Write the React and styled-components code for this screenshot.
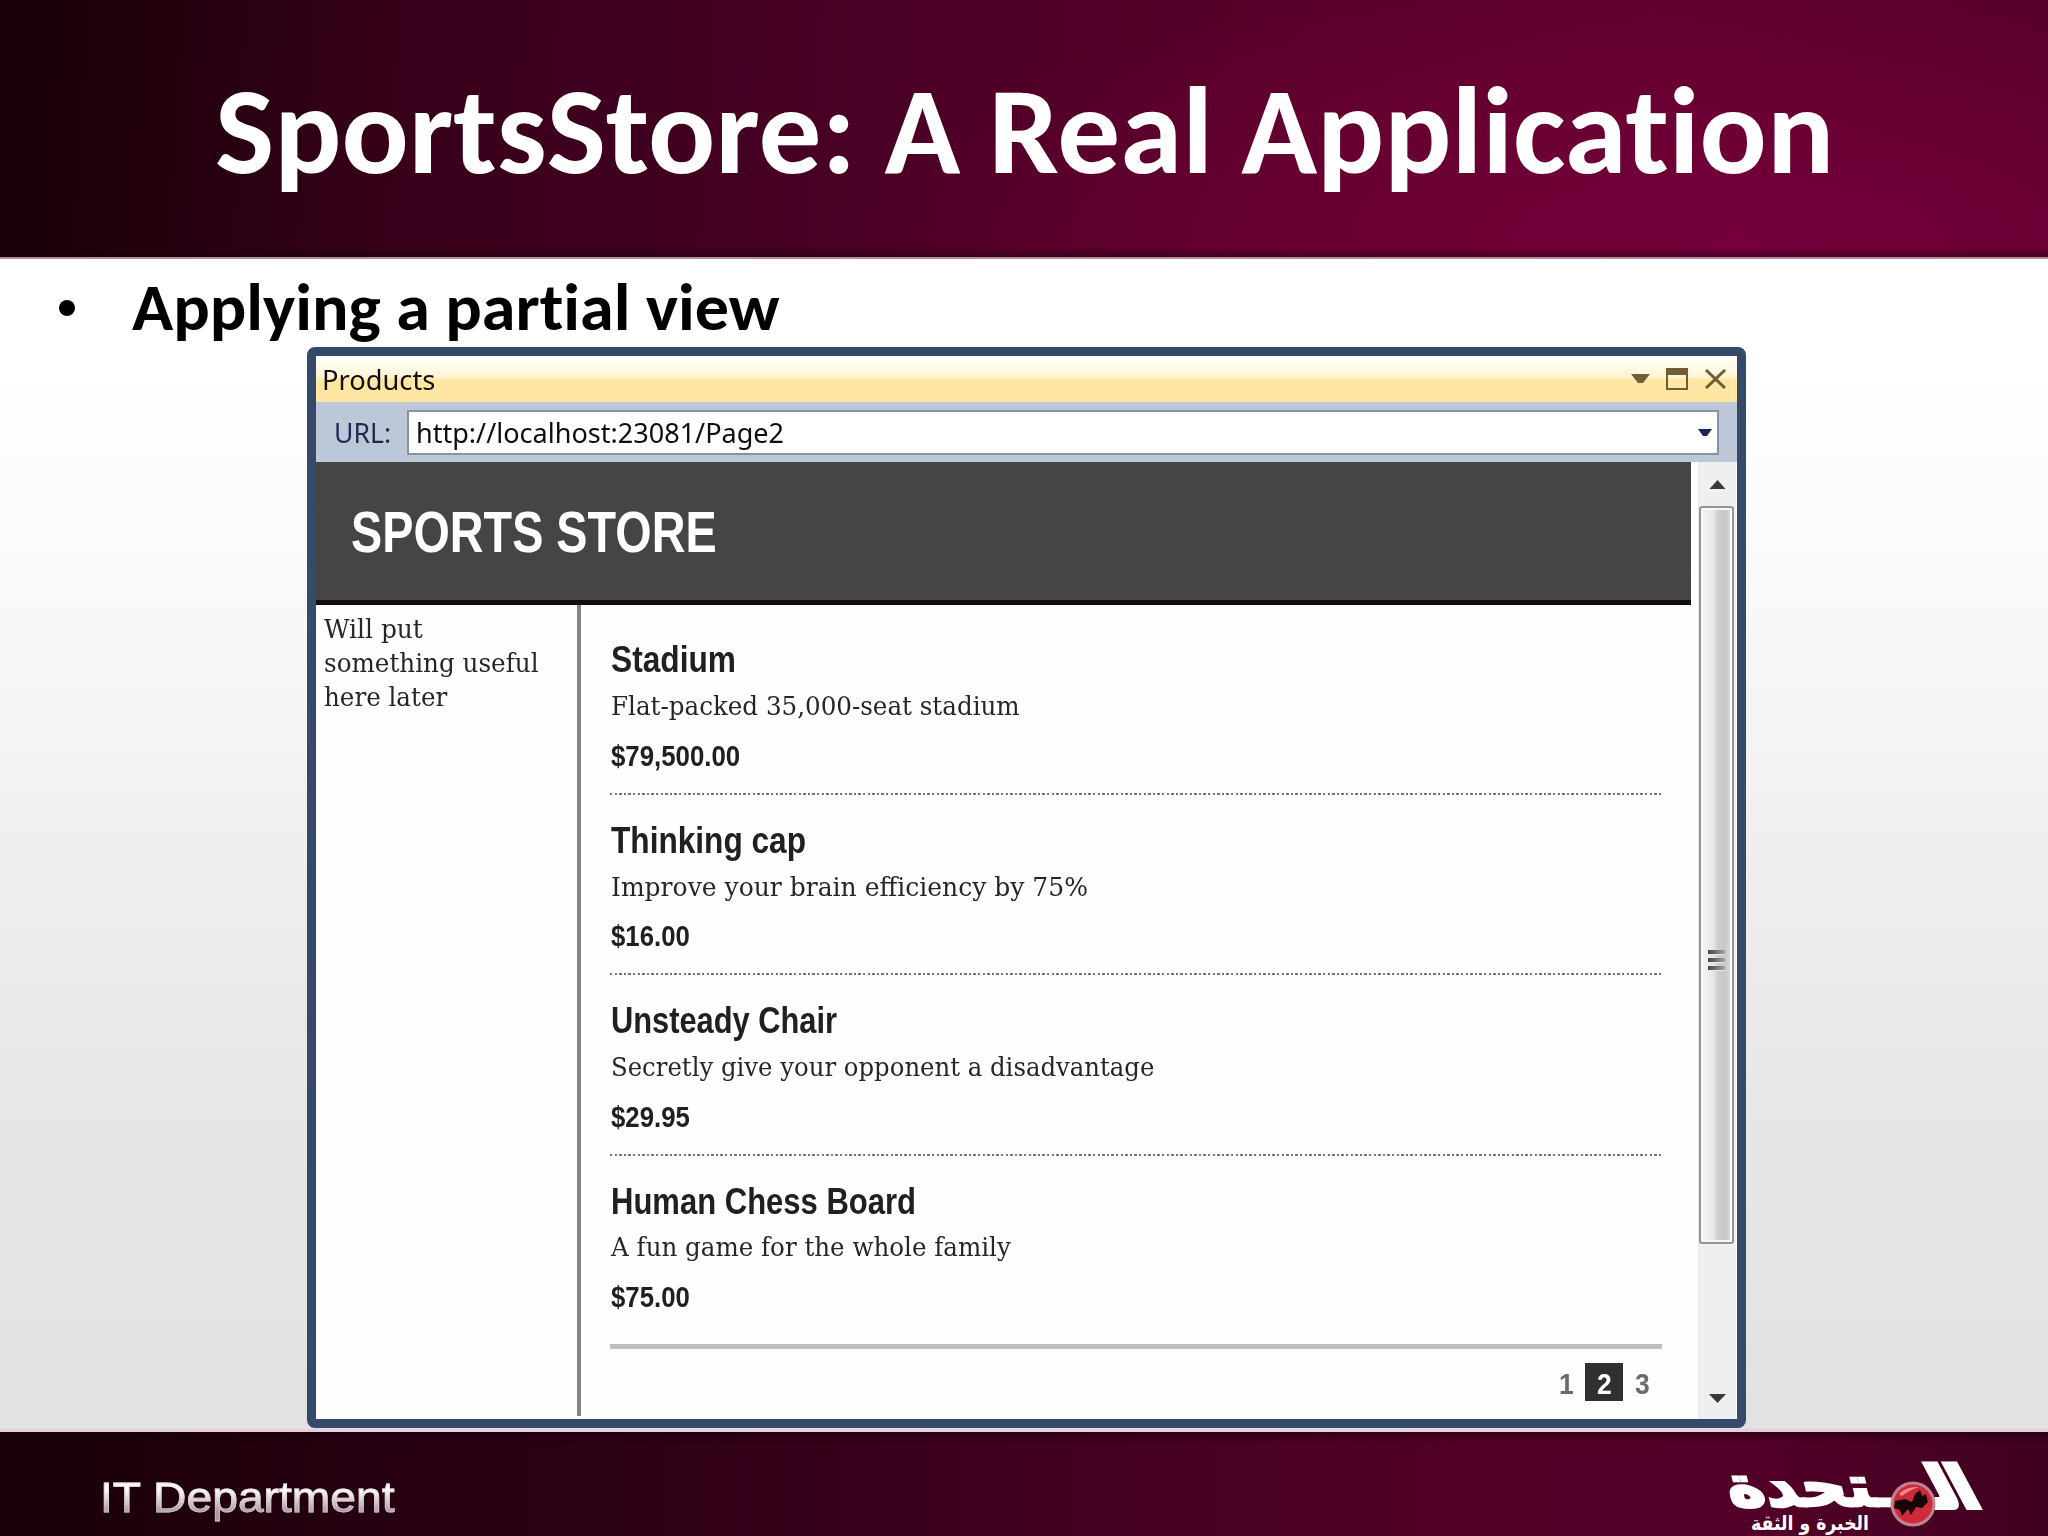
import React, { useLayoutEffect, useRef, useState } from "react";
import styled, { createGlobalStyle } from "styled-components";

const GlobalStyle = createGlobalStyle`
  * {
    box-sizing: border-box;
  }
  body {
    margin: 0;
    background: #fff;
  }
`;

const sans = `"Liberation Sans", Arial, sans-serif`;
const serif = `"DejaVu Serif Condensed", "DejaVu Serif", serif`;
const ui = `"Noto Sans", "Open Sans", sans-serif`;
const slideFont = `Carlito, Lato, sans-serif`;

const Slide = styled.div`
  width: 2048px;
  height: 1536px;
  display: flex;
  flex-direction: column;
  overflow: hidden;
  background: linear-gradient(180deg, #ffffff 24%, #fbfafd 34%, #f5f4f7 46%, #eeecef 58%, #e7e6e8 72%, #e2e1e4 91%);
`;

const Header = styled.header`
  height: 259px;
  flex: none;
  padding: 61px 0 0 215px;
  border-bottom: 2px solid #b58ba0;
  background:
    linear-gradient(180deg, rgba(20, 0, 8, 0) 96%, rgba(20, 0, 8, 0.4) 100%),
    radial-gradient(ellipse 900px 280px at 1740px 245px, rgba(122, 0, 62, 0.85) 0%, rgba(118, 0, 58, 0.5) 50%, rgba(110, 0, 52, 0) 100%),
    linear-gradient(94deg, #190007 0%, #24000f 9%, #38001a 20%, #400020 32%, #4c0025 45%, #580029 62%, #5e002c 80%, #55002a 100%);
`;

const Title = styled.h1`
  margin: 0;
  font: 700 ${(props) => props.$size}px / 140px ${slideFont};
  font-variant-ligatures: none;
  color: #fff;
`;

const Content = styled.main`
  flex: none;
  height: 1170px;
  display: flex;
  flex-direction: column;
`;

const BulletRow = styled.div`
  display: flex;
  align-items: center;
  height: 88px;
  flex: none;
  padding: 9px 0 0 59px;
  gap: 57px;
  font: 700 66px / 78px ${slideFont};
  font-variant-ligatures: none;
  color: #000;
`;

const Dot = styled.span`
  width: 16px;
  height: 16px;
  border-radius: 50%;
  background: #000;
`;

const Window = styled.section`
  width: 1439px;
  height: 1081px;
  flex: none;
  margin-left: 307px;
  border: 9px solid #354a6a;
  border-radius: 8px;
  background: #fefefe;
  display: flex;
  flex-direction: column;
`;

const TitleBar = styled.div`
  height: 46px;
  flex: none;
  display: flex;
  align-items: center;
  justify-content: space-between;
  padding: 0 10px 0 6px;
  background: linear-gradient(180deg, #fffefa 0%, #fff6d8 44%, #ffe6a2 52%, #ffe6a2 100%);
  font: 28px / 46px ${ui};
  color: #150f14;
`;

const WindowButtons = styled.div`
  display: flex;
  align-items: center;
  gap: 16px;
  padding-bottom: 1px;
`;

const UrlBar = styled.div`
  height: 60px;
  flex: none;
  display: flex;
  align-items: center;
  padding: 0 18px 0 18px;
  gap: 16px;
  background: #bcc7d8;
  font: 28px / 42px ${ui};
  color: #1d2a50;
`;

const UrlInput = styled.div`
  flex: 1;
  height: 45px;
  display: flex;
  align-items: center;
  justify-content: space-between;
  padding: 0 5px 0 7px;
  border: 2px solid #8593a5;
  background: #fff;
  color: #100c14;
`;

const Viewport = styled.div`
  flex: 1;
  display: flex;
  min-height: 0;
`;

const Page = styled.div`
  width: 1375px;
  display: flex;
  flex-direction: column;
`;

const Banner = styled.div`
  height: 143px;
  flex: none;
  padding: 38px 0 0 35px;
  border-bottom: 5px solid #130d12;
  background: linear-gradient(180deg, #444643, #464346);
  font: 700 57px / 64px ${sans};
  color: #fff;
`;

const Columns = styled.div`
  flex: 1;
  display: flex;
`;

const Sidebar = styled.aside`
  width: 265px;
  height: 811px;
  flex: none;
  padding: 7px 0 0 8px;
  border-right: 4px solid #858285;
  font: 26px / 34px ${serif};
  color: #28242c;
`;

const Products = styled.div`
  width: 1052px;
  margin: 9.6px 0 0 29px;
`;

const Item = styled.article`
  height: 180.4px;
  padding: 23.8px 0 0 1px;
  background: ${(props) =>
    props.$last
      ? "none"
      : "repeating-linear-gradient(90deg, #77747a 0 2.4px, transparent 2.4px 4.6px) left bottom / 100% 2px no-repeat"};
`;

const Name = styled.h3`
  margin: 0 0 1.8px;
  font: 700 36px / 44px ${sans};
  color: #202024;
`;

const Description = styled.div`
  margin-bottom: 5.7px;
  font: 26px / 44px ${serif};
  color: #28242c;
`;

const Price = styled.h4`
  margin: 0;
  font: 700 30px / 44px ${sans};
  color: #202024;
`;

const Pager = styled.nav`
  display: flex;
  justify-content: flex-end;
  margin-top: 7.500px;
  padding: 14px 1px 0 0;
  border-top: 5px solid #c0bec0;
`;

const PageLink = styled.span`
  width: 38px;
  height: 38px;
  display: flex;
  justify-content: center;
  font: 700 30px / 41px ${sans};
  color: ${(props) => (props.$current ? "#fff" : "#6c6a6c")};
  background: ${(props) => (props.$current ? "#303030" : "transparent")};
`;

const ScrollBar = styled.div`
  width: 38px;
  margin-left: 7px;
  display: flex;
  flex-direction: column;
  align-items: center;
  background: #f0eff0;
  border-left: 1px solid #e6e6e6;
`;

const Arrow = styled.svg`
  flex: none;
  display: block;
`;

const Thumb = styled.div`
  width: 35px;
  height: 738px;
  flex: none;
  margin: 17px 2px 150px 0;
  padding-top: 171px;
  display: flex;
  flex-direction: column;
  justify-content: center;
  align-items: center;
  gap: 3px;
  border: 2px solid #949494;
  border-radius: 3px;
  box-shadow: inset 0 0 0 2px #f8f8f8;
  background: linear-gradient(90deg, #f4f4f4 0%, #e6e6e6 42%, #cfcfcf 52%, #c8c8c8 78%, #dedede 100%);
`;

const GripLine = styled.span`
  width: 17px;
  height: 5px;
  background: linear-gradient(90deg, #464448, #a5a4a6);
  border-bottom: 1px solid #e8e8e8;
`;

const Footer = styled.footer`
  flex: 1;
  display: flex;
  justify-content: space-between;
  border-top: 3px solid #e3d0da;
  padding: 0 61px 0 100px;
  background:
    linear-gradient(180deg, rgba(20, 0, 8, 0.4) 0%, rgba(20, 0, 8, 0) 12%),
    linear-gradient(90deg, #190007 0%, #22000e 12%, #2c0015 30%, #42001f 52%, #530027 72%, #520027 86%, #400020 100%);
`;

const FitBox = styled.span`
  display: block;
  flex: none;
  white-space: nowrap;
  width: ${(props) => props.$width}px;
`;

const FitText = styled.span`
  display: inline-block;
  transform-origin: left center;
`;

const Department = styled.div`
  padding-top: 38px;
  font: 42px / 56px ${sans};
  filter: blur(0.7px);

  ${FitText} {
    color: transparent;
    -webkit-text-stroke: 0.8px rgba(225, 210, 218, 0.7);
    background: linear-gradient(180deg, #ffffff 35%, #a89aa2 75%);
    background-clip: text;
    -webkit-background-clip: text;
  }
`;

const LogoSvg = styled.svg`
  overflow: visible;
  flex: none;
`;

// squeezes or stretches a line of text to a fixed width
const Fit = ({ width, children }) => {
  const ref = useRef(null);
  const [scale, setScale] = useState(1);

  useLayoutEffect(() => {
    setScale(width / ref.current.offsetWidth);
  }, [width, children]);

  return (
    <FitBox $width={width}>
      <FitText ref={ref} style={{ transform: `scaleX(${scale})` }}>
        {children}
      </FitText>
    </FitBox>
  );
};

const products = [
  { name: "Stadium", nameWidth: 125, text: "Flat-packed 35,000-seat stadium", textWidth: 409, price: "$79,500.00", priceWidth: 129 },
  { name: "Thinking cap", nameWidth: 195, text: "Improve your brain efficiency by 75%", textWidth: 477, price: "$16.00", priceWidth: 79 },
  { name: "Unsteady Chair", nameWidth: 226, text: "Secretly give your opponent a disadvantage", textWidth: 543, price: "$29.95", priceWidth: 79 },
  { name: "Human Chess Board", nameWidth: 305, text: "A fun game for the whole family", textWidth: 400, price: "$75.00", priceWidth: 79 },
];

const Logo = () => (
  <LogoSvg width="260" height="104" viewBox="1727 1432 260 104" fill="#fff">
    <g fontFamily="DejaVu Sans" fontWeight="700" direction="rtl" stroke="#fff">
      <text
        transform="translate(1983 1507) skewX(28)"
        fontSize="56"
        textLength="61"
        lengthAdjust="spacingAndGlyphs"
        strokeWidth="6"
      >
        الـ
      </text>
      <text
        transform="translate(1899 1506) skewX(14) scale(1 1.3)"
        fontSize="44"
        textLength="168"
        lengthAdjust="spacingAndGlyphs"
        strokeWidth="2"
      >
        ـتحدة
      </text>
      <text x="1869" y="1530" fontSize="20" strokeWidth="0" textLength="118" lengthAdjust="spacingAndGlyphs">
        الخبرة و الثقة
      </text>
    </g>
    <circle cx="1913" cy="1504" r="21" fill="#cf2a3c" stroke="#c0828c" strokeWidth="3" />
    <path d="M1899 1494q8-8 20-7-10 3-17 9z" fill="#f08a90" />
    <path
      d="M1895 1501l10-2 7 3 3-8 5-4 2 6 4-2 2 8-6 6-6-1-5 8-3-6-6 7-2-6-6-2z"
      fill="#17050a"
    />
  </LogoSvg>
);

const App = () => {
  return (
    <Slide>
      <GlobalStyle />
      <Header>
        <Title $size={123}>
          <Fit width={1619}>SportsStore: A Real Application</Fit>
        </Title>
      </Header>
      <Content>
        <BulletRow>
          <Dot />
          <Fit width={647}>Applying a partial view</Fit>
        </BulletRow>
        <Window>
          <TitleBar>
            <Fit width={113}>Products</Fit>
            <WindowButtons>
              <svg width="19" height="10" viewBox="0 0 19 10">
                <path d="M0 0h19l-7 9h-5z" fill="#6f6137" />
              </svg>
              <svg width="22" height="22" viewBox="0 0 22 22">
                <path d="M1 1h20v20h-20z" fill="none" stroke="#6f5d33" strokeWidth="2" />
                <path d="M0 0h22v7h-22z" fill="#6f5d33" />
              </svg>
              <svg width="23" height="20" viewBox="0 0 23 20">
                <path d="M2 1l19 18M21 1l-19 18" stroke="#6f5d33" strokeWidth="3" />
              </svg>
            </WindowButtons>
          </TitleBar>
          <UrlBar>
            <Fit width={57}>URL:</Fit>
            <UrlInput>
              <Fit width={368}>http://localhost:23081/Page2</Fit>
              <svg width="14" height="7" viewBox="0 0 14 7">
                <path d="M0 0h14l-5 7h-4z" fill="#1b2456" />
              </svg>
            </UrlInput>
          </UrlBar>
          <Viewport>
            <Page>
              <Banner>
                <Fit width={366}>SPORTS STORE</Fit>
              </Banner>
              <Columns>
                <Sidebar>
                  <Fit width={99}>Will put</Fit>
                  <Fit width={215}>something useful</Fit>
                  <Fit width={123}>here later</Fit>
                </Sidebar>
                <Products>
                  {products.map((product, i) => (
                    <Item key={product.name} $last={i === products.length - 1}>
                      <Name>
                        <Fit width={product.nameWidth}>{product.name}</Fit>
                      </Name>
                      <Description>
                        <Fit width={product.textWidth}>{product.text}</Fit>
                      </Description>
                      <Price>
                        <Fit width={product.priceWidth}>{product.price}</Fit>
                      </Price>
                    </Item>
                  ))}
                  <Pager>
                    <PageLink>
                      <Fit width={15}>1</Fit>
                    </PageLink>
                    <PageLink $current>
                      <Fit width={15}>2</Fit>
                    </PageLink>
                    <PageLink>
                      <Fit width={15}>3</Fit>
                    </PageLink>
                  </Pager>
                </Products>
              </Columns>
            </Page>
            <ScrollBar>
              <Arrow width="17" height="27" viewBox="0 0 17 27">
                <path d="M8.500 18l8 9h-16z" fill="#3a383c" />
              </Arrow>
              <Thumb>
                <GripLine />
                <GripLine />
                <GripLine />
              </Thumb>
              <Arrow width="17" height="10" viewBox="0 0 17 10">
                <path d="M0 0h17l-8.500 9z" fill="#3a383c" />
              </Arrow>
            </ScrollBar>
          </Viewport>
        </Window>
      </Content>
      <Footer>
        <Department>
          <Fit width={295}>IT Department</Fit>
        </Department>
        <Logo />
      </Footer>
    </Slide>
  );
};

export default App;
